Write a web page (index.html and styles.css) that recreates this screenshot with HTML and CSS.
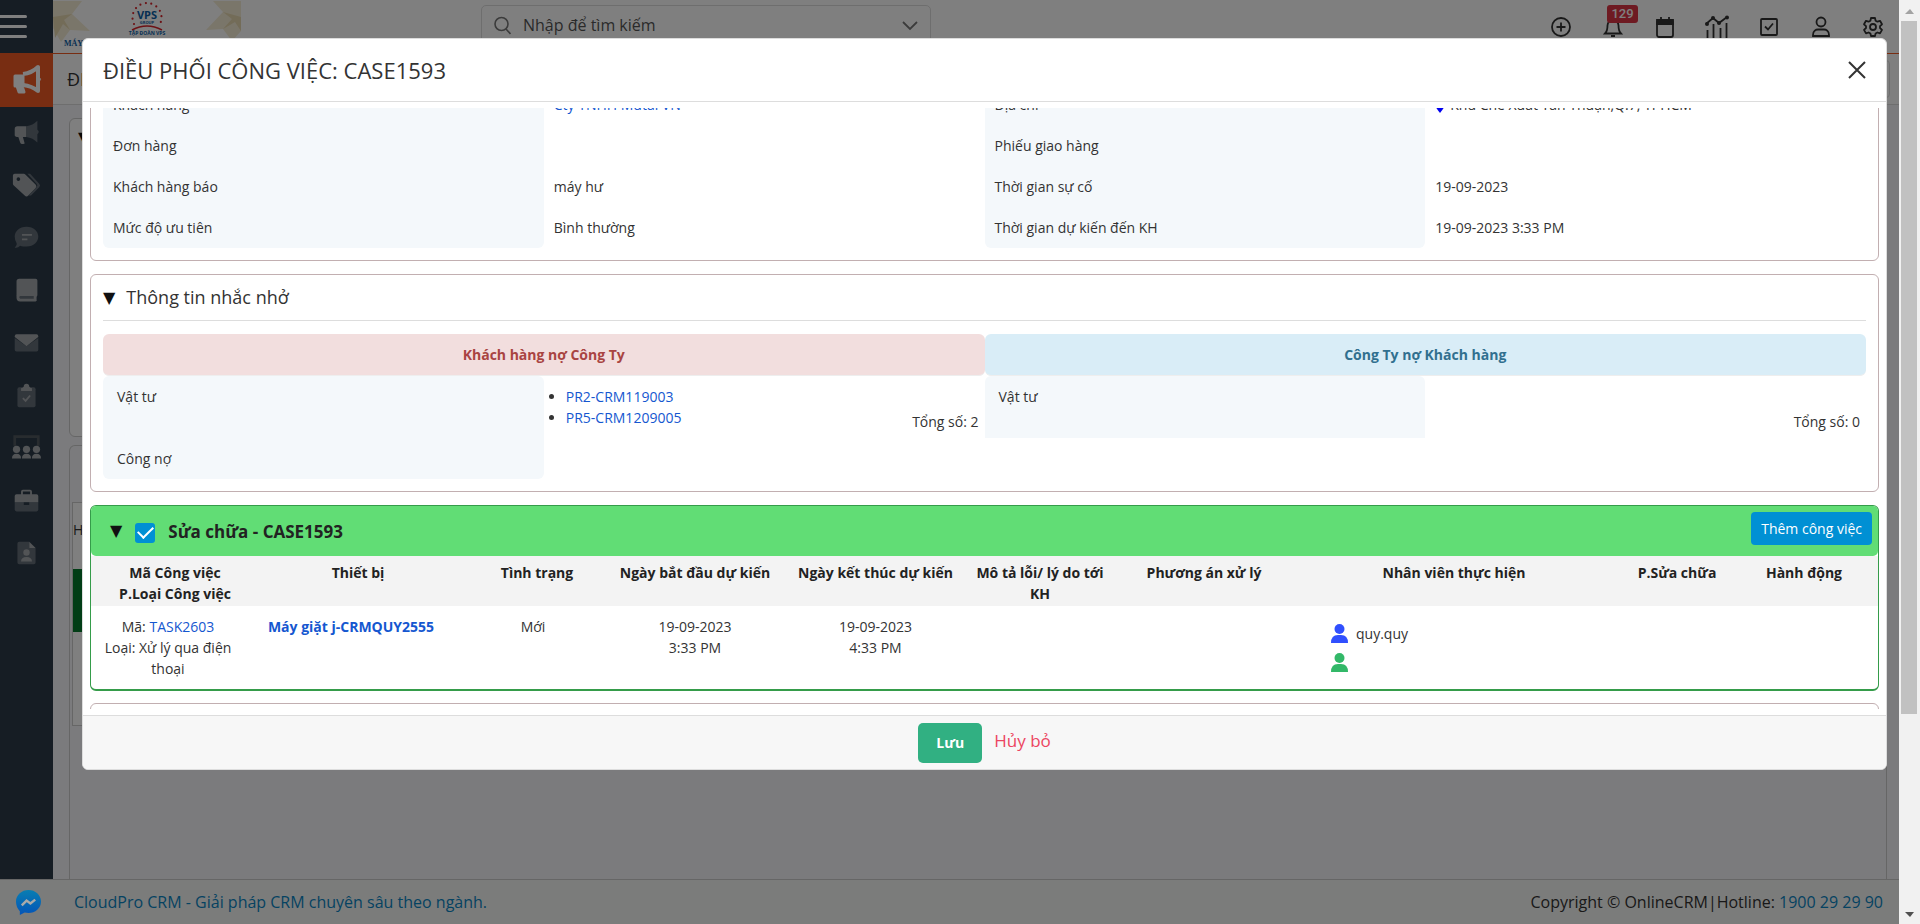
FILE: index.html
```html
<!DOCTYPE html>
<html lang="vi">
<head>
<meta charset="utf-8">
<title>Điều phối công việc: CASE1593</title>
<link rel="stylesheet" href="styles.css">
</head>
<body>
<div class="page">
  <div class="app" aria-hidden="true">
    <header class="topbar">
      <button class="burger" type="button" aria-label="Menu"><span></span><span></span><span></span></button>
      <svg class="logo" viewBox="0 0 188 50" role="img" aria-label="VPS Group">
        <g fill="#f5ecd4">
          <path d="M0 0h29l-10 13 18 17-20-1-9 12-8-14z"/>
          <path d="M188 0h-28l10 11-17 18 17-1 9 12 9-10z"/>
        </g>
        <g fill="#e6d8b0"><path d="M0 16l19-3-8 6 6 10-7-6-8 14z"/><path d="M188 16l-18-5 9 7-9 10 12-7 6 9z"/></g>
        <path d="M81 23a14.500 14.500 0 1 1 26 0" fill="none" stroke="#d8232a" stroke-width="2.200" stroke-linecap="round" stroke-dasharray="0 5.600"/>
        <path d="M79 29q15-8 30 0" fill="none" stroke="#d8232a" stroke-width="1.500"/>
        <text x="94" y="18" text-anchor="middle" class="logo-vps">VPS</text>
        <text x="94" y="23" text-anchor="middle" class="logo-group">GROUP</text>
        <text x="94" y="34" text-anchor="middle" class="logo-name">TẬP ĐOÀN VPS</text>
        <text x="11" y="45" class="logo-may">MÁY</text>
      </svg>
      <div class="search">
        <svg width="17" height="19" viewBox="0 0 17 19" fill="none" stroke="#777" stroke-width="1.600"><circle cx="7.500" cy="8" r="6.500"/><path d="M12 13l4.500 5"/></svg>
        <input type="text" placeholder="Nhập để tìm kiếm" aria-label="Tìm kiếm">
        <svg width="16" height="10" viewBox="0 0 16 10" fill="none" stroke="#777" stroke-width="1.800"><path d="M1 1l7 7 7-7"/></svg>
      </div>
      <nav class="tools">
        <svg viewBox="0 0 24 24"><circle cx="12" cy="12" r="9"/><path d="M12 7.500v9M7.500 12h9"/></svg>
        <span class="bell"><svg viewBox="0 0 24 24"><path d="M4 18.500c2-2 2.500-4 2.500-8a5.500 5.500 0 0 1 11 0c0 4 .500 6 2.500 8z"/><path d="M10 21h4" stroke-width="2"/></svg><b class="badge">129</b></span>
        <svg viewBox="0 0 24 24"><rect x="4" y="5" width="16" height="17" rx="2"/><path d="M4 5h16v4H4z" fill="#333"/><path d="M8 2v3M16 2v3"/></svg>
        <svg viewBox="0 0 24 24"><path d="M1 9l7-6 6 5 8-6M2.500 15v9M8.500 9v15M15.500 13v11M21.500 8v16"/><g fill="#333" stroke="none"><circle cx="2" cy="9" r="2"/><circle cx="8" cy="3" r="2"/><circle cx="14" cy="8" r="2"/><circle cx="22" cy="2.500" r="2"/></g></svg>
        <svg viewBox="0 0 24 24"><rect x="4" y="4" width="16" height="16" rx="1"/><path d="M8 11.500l3 3 5-6"/></svg>
        <svg viewBox="0 0 24 24"><circle cx="12" cy="7" r="4.500"/><path d="M4 21v-1c0-4 3-5.500 5-5.500h6c2 0 5 1.500 5 5.500v1z"/></svg>
        <svg viewBox="0 0 24 24"><circle cx="12" cy="12" r="3"/><path stroke-linejoin="round" d="M10 3h4l.6 2.700 1.800 1 2.600-.9 2 3.500-2 1.900v1.800l2 1.900-2 3.500-2.600-.9-1.800 1L14 21h-4l-.6-2.500-1.800-1-2.600.9-2-3.500 2-1.900v-1.800L3 9.300l2-3.500 2.600.9 1.800-1z"/></svg>
      </nav>
    </header>
    <div class="middle">
      <aside class="sidebar"><div class="side-list">
        <span class="side-item active"><svg viewBox="0 0 32 32"><path d="M4 12h8v10H4zM6 22h5l2 6H8z" fill="#fff" stroke="#fff" stroke-width="3" stroke-linejoin="round"/><path d="M12 10q9-1 15-7v24q-6-5-15-6" fill="none" stroke="#fff" stroke-width="4" stroke-linejoin="round"/><path d="M28 13q3 2 0 5" fill="#fff" stroke="#fff"/></svg></span>
        <span class="side-item"><svg viewBox="0 0 32 32"><path class="hi" d="M6 9h10v12h-4l2 7q-4 2-5-1l-2-6q-4 0-4-2v-7q0-3 3-3z"/><path class="lo" d="M16 9q7-1 12-6v10q3 2 0 5v9q-5-5-12-6z"/></svg></span>
        <span class="side-item"><svg viewBox="0 0 32 32"><path class="hi" fill-rule="evenodd" d="M3 3h10q1 0 2 1l11 11q2 2 0 4l-8 8q-2 2-4 0L2 16q-1-1-1-2V5q0-2 2-2zM7 7a2 2 0 1 0 .1 0z"/><path class="lo" d="M17 3h3l10 11q2 2 0 4l-9 9h-3l9-9q2-2 0-4z"/></svg></span>
        <span class="side-item"><svg viewBox="0 0 32 32"><path class="lo" d="M16 4c8 0 13 5 13 11s-5 11-13 11c-2 0-5 0-7-1q-3 3-6 2 3-3 2-5-2-3-2-7C3 9 8 4 16 4z"/><path class="line" d="M11 13h11M11 18h6"/></svg></span>
        <span class="side-item"><svg viewBox="0 0 32 32"><path class="lo" d="M5 21h22v6H8z"/><path class="hi" d="M8 3h18q2 0 2 2v16q0 1-1 2v3q1 2-1 2H9q-4 0-4-4V6q0-3 3-3zm1 19q-2 1 0 3h15v-3z"/></svg></span>
        <span class="side-item"><svg viewBox="0 0 32 32"><path class="lo" d="M3 11l13 9 13-9v13q0 2-2 2H5q-2 0-2-2z"/><path class="hi" d="M5 7h22q2 0 2 2v1l-13 10L3 10V9q0-2 2-2z"/></svg></span>
        <span class="side-item"><svg viewBox="0 0 32 32"><rect class="lo" x="6" y="7" width="20" height="22" rx="2"/><path class="hi" d="M10 8q2 0 3-2 0-3 3-3t3 3q1 2 3 2v3H10z"/><path class="line" d="M12 19l3 3 5-6"/></svg></span>
        <span class="side-item"><svg viewBox="0 0 32 32"><path d="M3 14V4h26v10" fill="none" stroke="#51585f" stroke-width="3"/><g class="hi"><circle cx="5" cy="18" r="4"/><circle cx="16" cy="18" r="4"/><circle cx="27" cy="18" r="4"/><path d="M0 28q0-5 5-5t5 5zM11 28q0-5 5-5t5 5zM22 28q0-5 5-5t5 5z"/></g></svg></span>
        <span class="side-item"><svg viewBox="0 0 32 32"><path class="lo" d="M3 18h26v8q0 2-2 2H5q-2 0-2-2z"/><path class="hi" d="M5 9h5V6q0-2 2-2h8q2 0 2 2v3h5q2 0 2 2v7H3v-7q0-2 2-2zm7 0h8V6h-8z"/><path d="M13 18h6v3h-6z" fill="#2c3b49"/></svg></span>
        <span class="side-item"><svg viewBox="0 0 32 32"><path class="lo" d="M8 4h11v7h7v16q0 2-2 2H8q-2 0-2-2V6q0-2 2-2z"/><path class="hi" d="M19 4l7 7h-7z"/><g class="hi"><circle cx="16" cy="16" r="3.500"/><path d="M10 26q0-5 6-5t6 5z"/></g></svg></span>
      </div></aside>
      <div class="workspace">
        <div class="module-bar"><h1>ĐIỀU</h1><span class="ghost-button"></span></div>
        <div class="workarea">
          <div class="back-card first"><span class="tri">▼</span></div>
          <div class="back-card second"><div class="back-table"><div class="back-head">Hạn</div><div class="back-row"></div></div></div>
        </div>
      </div>
    </div>
    <footer class="footer">
      <span class="footer-gap"></span>
      <a href="#">CloudPro CRM - Giải pháp CRM chuyên sâu theo ngành.</a>
      <p>Copyright © OnlineCRM|Hotline: <a href="#">1900 29 29 90</a></p>
    </footer>
  </div>
  <div class="overlay"></div>
  <button class="messenger" type="button" aria-label="Messenger"><svg viewBox="0 0 26 26"><defs><linearGradient id="msg" x1="0" y1="0" x2="0" y2="1"><stop offset="0" stop-color="#087eb2"/><stop offset="1" stop-color="#0454b8"/></linearGradient></defs><path d="M13 0c7 0 13 5 13 12s-6 12-13 12q-2 0-4-.500L4 26v-4Q0 18 0 12C0 5 6 0 13 0z" fill="url(#msg)"/><path d="M6 16l5-5 4 3 5-4" fill="none" stroke="#aaa" stroke-width="2.500"/></svg></button>

  <section class="modal" role="dialog" aria-labelledby="modal-title">
    <header class="modal-head">
      <h2 id="modal-title">ĐIỀU PHỐI CÔNG VIỆC: CASE1593</h2>
      <button class="close" type="button" aria-label="Đóng"><svg viewBox="0 0 18 18"><path d="M1 1l16 16M17 1L1 17"/></svg></button>
    </header>
    <div class="modal-body">
      <section class="panel details">
        <dl class="info">
          <dt>Khách hàng</dt><dd><a href="#">Cty TNHH Mutal VN</a></dd><dt>Địa chỉ</dt><dd><svg class="pin" viewBox="0 0 10 14"><path d="M5 14Q0 8 0 5a5 5 0 0 1 10 0q0 3-5 9z" fill="#0000f0"/></svg>Khu Chế Xuất Tân Thuận,Q.7, TPHCM</dd>
          <dt>Đơn hàng</dt><dd></dd><dt>Phiếu giao hàng</dt><dd></dd>
          <dt>Khách hàng báo</dt><dd>máy hư</dd><dt>Thời gian sự cố</dt><dd>19-09-2023</dd>
          <dt class="end">Mức độ ưu tiên</dt><dd>Bình thường</dd><dt class="end">Thời gian dự kiến đến KH</dt><dd>19-09-2023 3:33 PM</dd>
        </dl>
      </section>

      <section class="panel reminders">
        <h3><span class="tri">▼</span>Thông tin nhắc nhở</h3>
        <div class="debts">
          <div class="debt">
            <h4 class="owed">Khách hàng nợ Công Ty</h4>
            <div class="debt-row tall"><span class="label top">Vật tư</span>
              <div class="value"><ul><li><a href="#">PR2-CRM119003</a></li><li><a href="#">PR5-CRM1209005</a></li></ul><span class="total">Tổng số: 2</span></div></div>
            <div class="debt-row"><span class="label bottom">Công nợ</span></div>
          </div>
          <div class="debt">
            <h4 class="owing">Công Ty nợ Khách hàng</h4>
            <div class="debt-row tall"><span class="label top">Vật tư</span>
              <div class="value"><span class="total">Tổng số: 0</span></div></div>
          </div>
        </div>
      </section>

      <section class="panel repair">
        <div class="repair-head">
          <span class="tri">▼</span>
          <input type="checkbox" id="repair" checked>
          <label for="repair">Sửa chữa - CASE1593</label>
          <button type="button" class="add">Thêm công việc</button>
        </div>
        <table>
          <colgroup><col class="c1"><col class="c2"><col class="c3"><col class="c4"><col class="c5"><col class="c6"><col class="c7"><col class="c8"><col class="c9"><col class="c10"></colgroup>
          <thead><tr><th class="shift">Mã Công việc<br>P.Loại Công việc</th><th class="shift">Thiết bị</th><th class="nudge">Tình trạng</th><th>Ngày bắt đầu dự kiến</th><th>Ngày kết thúc dự kiến</th><th>Mô tả lỗi/ lý do tới<br>KH</th><th>Phương án xử lý</th><th>Nhân viên thực hiện</th><th>P.Sửa chữa</th><th class="last">Hành động</th></tr></thead>
          <tbody><tr>
            <td>Mã: <a href="#">TASK2603</a><br>Loại: Xử lý qua điện<br>thoại</td>
            <td><a class="strong" href="#">Máy giặt j-CRMQUY2555</a></td>
            <td>Mới</td><td>19-09-2023<br>3:33 PM</td><td>19-09-2023<br>4:33 PM</td><td></td><td></td>
            <td class="staff">
              <div><svg class="blue" viewBox="0 0 17 19"><circle cx="8.500" cy="5" r="5"/><path d="M0 19q0-8 7-8h3q7 0 7 8z"/></svg>quy.quy</div>
              <div><svg class="green" viewBox="0 0 17 19"><circle cx="8.500" cy="5" r="5"/><path d="M0 19q0-8 7-8h3q7 0 7 8z"/></svg></div>
            </td><td></td><td></td></tr></tbody>
        </table>
      </section>
      <section class="panel next"></section>
    </div>
    <footer class="modal-foot">
      <button class="save" type="button">Lưu</button>
      <a class="cancel" href="#">Hủy bỏ</a>
    </footer>
  </section>
</div>
<div class="scrollbar" aria-hidden="true">
  <svg viewBox="0 0 21 21"><path d="M6 14l5-5 4 5z" fill="#a3a3a3"/></svg>
  <div class="thumb"></div>
  <svg viewBox="0 0 21 21"><path d="M6 9h9l-4 5z" fill="#505050"/></svg>
</div>
</body>
</html>
```
FILE: styles.css
```css
* { box-sizing: border-box; }
body {
  margin: 0;
  height: 100vh;
  display: flex;
  overflow: hidden;
  font: 14px/21px "Open Sans", "Noto Sans", sans-serif;
  color: #333;
}
a { color: #1557d0; text-decoration: none; }
button, input { font: inherit; }
h1, h2, h3, h4, p, dl, dd, ul { margin: 0; padding: 0; }
svg { flex: none; }

.page { position: relative; flex: 1; min-width: 0; height: 100%; }
.app { height: 100%; display: flex; flex-direction: column; }
.overlay { position: absolute; inset: 0; background: rgba(0, 0, 0, .5); }

/* top bar */
.topbar { display: flex; height: 54px; background: #fff; border-bottom: 1px solid #f15a24; }
.burger { width: 53px; height: 53px; border: 0; padding: 0 26px 0 0; background: #2c3b49; display: flex; flex-direction: column; justify-content: center; gap: 7px; }
.burger span { height: 3px; background: #fff; border-radius: 0 2px 2px 0; }
.logo { width: 188px; height: 50px; margin-top: 1px; }
.logo-vps { font: bold 11px "Open Sans", sans-serif; fill: #0d5ea6; }
.logo-group { font: bold 4px "Open Sans", sans-serif; fill: #0d5ea6; }
.logo-name { font: bold 5px "Open Sans", sans-serif; fill: #0d5ea6; }
.logo-may { font: bold 8px "Liberation Serif", serif; fill: #0d5ea6; }
.search { width: 450px; height: 43px; margin: 5px 0 0 240px; padding: 0 12px 2px; border: 1px solid #ddd; border-radius: 5px; display: flex; align-items: center; gap: 12px; }
.search input { flex: 1; min-width: 0; border: 0; background: none; font-size: 16px; padding: 0; }
.search input::placeholder { color: #555; opacity: 1; }
.tools { margin-left: auto; padding-right: 14px; display: flex; align-items: center; gap: 28px; }
.tools svg { width: 24px; height: 24px; display: block; fill: none; stroke: #333; stroke-width: 1.8; }
.bell { position: relative; }
.badge { position: absolute; left: 6px; top: -10px; width: 31px; height: 18px; border-radius: 3px; background: #dc3545; color: #fff; font: 500 13px/18px Roboto, sans-serif; text-align: center; }

/* page behind the dialog */
.middle { flex: 1; display: flex; min-height: 0; }
.sidebar { width: 53px; background: #2c3b49; }
.side-list { height: 525px; display: flex; flex-direction: column; }
.side-item { flex: 1; display: flex; align-items: center; justify-content: center; }
.side-item svg { width: 29px; height: 29px; }
.side-item.active { background: #f15a24; }
.side-item.active svg { width: 32px; height: 32px; }
.hi { fill: #a5a9ad; }
.lo { fill: #656e78; }
.line { fill: none; stroke: #a5a9ad; stroke-width: 2; }
.workspace { flex: 1; min-width: 0; display: flex; flex-direction: column; background: #f6f7fa; }
.module-bar { height: 51px; padding: 6px 9px 6px 14px; display: flex; align-items: center; justify-content: space-between; background: #fff; border-bottom: 1px solid #ddd; }
.module-bar h1 { font-size: 18px; font-weight: 500; color: #333; }
.ghost-button { width: 100px; height: 38px; border: 1px solid #ddd; border-radius: 4px; }
.workarea { flex: 1; min-height: 0; padding: 13px 12px 0 16px; display: flex; flex-direction: column; gap: 8px; }
.back-card { border: 1px solid #ccc; border-radius: 6px; }
.back-card.first { height: 319px; background: #fff; padding: 8px; }
.back-card.second { flex: 1; border-bottom: 0; border-radius: 6px 6px 0 0; padding: 56px 2px 0; }
.back-table { height: 224px; background: #fff; border: 1px solid #ccc; border-right: 0; }
.back-head { height: 66px; padding-top: 16px; }
.back-row { height: 63px; background: #047a2c; }
.footer { height: 45px; border-top: 1px solid #ccc; background: #f7f8f6; display: flex; align-items: center; padding-right: 16px; font-size: 16px; }
.footer-gap { width: 74px; }
.footer p { margin-left: auto; }
.footer a { color: #0b86c4; }
.messenger { position: absolute; left: 16px; bottom: 9px; width: 25px; height: 25px; border: 0; padding: 0; background: none; }
.messenger svg { width: 25px; height: 25px; display: block; }

/* dialog */
.modal { position: absolute; left: 82px; right: 12px; top: 38px; border: 1px solid #ddd; border-radius: 6px; background: #fff; display: flex; flex-direction: column; overflow: hidden; }
.modal-head { height: 63px; padding: 0 20px; border-bottom: 1px solid #ddd; display: flex; align-items: center; justify-content: space-between; }
.modal-head h2 { font-size: 22px; line-height: 28px; font-weight: 500; }
.close { border: 0; padding: 0; background: none; width: 18px; height: 24px; }
.close svg { width: 18px; height: 18px; display: block; stroke: #333; stroke-width: 2; }
.modal-body { height: 601px; margin: 6px 0; padding: 0 7px; overflow: hidden; }
.panel { border: 1px solid #c2afb1; border-radius: 6px; padding: 12px; margin-bottom: 13px; }
.panel.details { margin-top: -37px; }
.info { display: grid; grid-template-columns: repeat(4, 1fr); grid-auto-rows: 41px; line-height: 41px; }
.info dt { background: #f4f8fb; padding-left: 10px; }
.info dd { padding-left: 10px; }
.info .end { border-radius: 0 0 6px 6px; }
.pin { width: 10px; height: 14px; margin-right: 5px; vertical-align: middle; }

.panel.reminders { padding-top: 10px; }
.reminders h3 { font-size: 18px; line-height: 25px; font-weight: 500; display: flex; align-items: center; gap: 11px; padding-bottom: 10px; border-bottom: 1px solid #ddd; }
.tri { font: 16px/20px "DejaVu Sans", sans-serif; color: #111; }
.debts { display: grid; grid-template-columns: 1fr 1fr; margin-top: 13px; }
.debt h4 { height: 42px; line-height: 41px; text-align: center; font-size: 14px; border-radius: 6px; border-bottom: 1px solid #eee; }
.owed { background: #f2dede; color: #a94442; }
.owing { background: #d9edf7; color: #31708f; }
.debt-row { display: grid; grid-template-columns: 1fr 1fr; min-height: 41px; }
.debt-row.tall { min-height: 62px; }
.label { background: #f4f8fb; padding: 10px 14px; }
.label.top { border-radius: 6px 6px 0 0; }
.label.bottom { border-radius: 0 0 6px 6px; }
.value { display: flex; justify-content: space-between; padding: 10px 6px 0 22px; }
.total { margin-left: auto; padding-top: 25px; }

.panel.repair { padding: 0; border-color: #359c4a; border-bottom-width: 2px; margin-bottom: 12px; }
.repair-head { height: 50px; padding: 0 6px 0 19px; display: flex; align-items: center; background: #61dd75; border-radius: 5px; }
.repair-head input { appearance: none; width: 20px; height: 20px; margin: 3px 13px 0; border-radius: 3px; background: #0090d4; display: grid; place-items: center; }
.repair-head input::after { content: ""; width: 7px; height: 13px; border: solid #fff; border-width: 0 2px 2px 0; transform: rotate(45deg); margin-top: -4px; }
.repair-head label { font-size: 17px; font-weight: 700; color: #222; }
.add { margin: 0 0 6px auto; height: 33px; padding: 0 10px; border: 0; border-radius: 4px; background: #0090d4; color: #fff; }
table { width: 100%; table-layout: fixed; border-collapse: collapse; text-align: center; }
th, td { vertical-align: top; padding: 0; }
th { height: 50px; padding-top: 6px; background: #f3f3f3; font-weight: 700; color: #222; white-space: nowrap; }
th.shift { padding-left: 14px; }
th.nudge { padding-left: 8px; }
th.last { padding-right: 14px; }
td { padding-top: 10px; height: 83px; }
.strong { font-weight: 700; }
.c1 { width: 154px; } .c2 { width: 212px; } .c3 { width: 152px; } .c4 { width: 172px; } .c5 { width: 189px; }
.c6 { width: 140px; } .c7 { width: 188px; } .c8 { width: 312px; } .c9 { width: 134px; }
.staff { padding: 13px 0 0 33px; text-align: left; }
.staff div { height: 29px; display: flex; align-items: center; gap: 8px; }
.staff svg { width: 17px; height: 19px; }
.blue { fill: #304ffe; }
.green { fill: #32b868; }
.panel.next { height: 60px; }

.modal-foot { height: 54px; border-top: 1px solid #ddd; background: #f7f7f7; display: flex; justify-content: center; align-items: center; gap: 12px; }
.save { width: 64px; height: 40px; border: 0; border-radius: 5px; background: #31b082; color: #fff; font-weight: 700; }
.cancel { color: #ec4561; font-size: 17px; padding-bottom: 4px; }

/* page scroll bar */
.scrollbar { width: 21px; height: 100%; background: #f1f1f1; display: flex; flex-direction: column; }
.scrollbar svg { width: 21px; height: 21px; }
.thumb { height: 75%; flex: none; margin: 0 3px 0 2px; background: #c1c1c1; }
.scrollbar svg:last-child { margin-top: auto; }
```
